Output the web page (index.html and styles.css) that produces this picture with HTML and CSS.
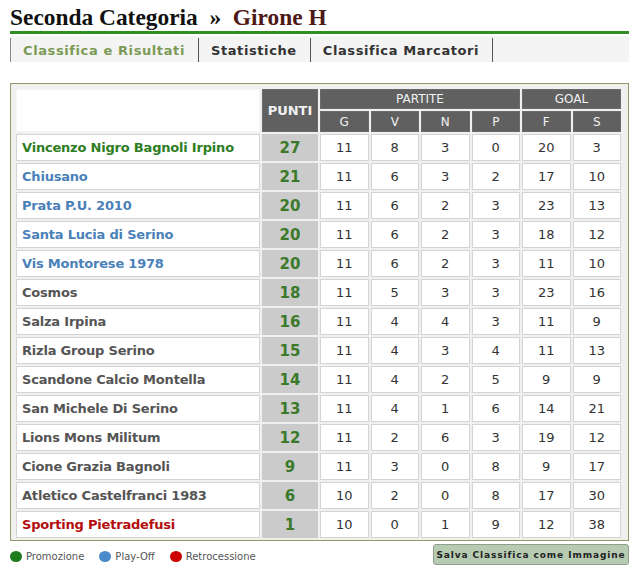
FILE: index.html
```html
<!DOCTYPE html>
<html lang="it">
<head>
<meta charset="utf-8">
<title>Seconda Categoria » Girone H</title>
<link rel="stylesheet" href="styles.css">
</head>
<body>
<div class="page">
  <h1 class="title">Seconda Categoria &nbsp;»&nbsp; <span class="girone">Girone H</span></h1>
  <nav class="tabs">
    <a class="tab active">Classifica e Risultati</a>
    <a class="tab">Statistiche</a>
    <a class="tab">Classifica Marcatori</a>
  </nav>
  <div class="box">
    <table class="standings">
      <thead>
        <tr class="head-top">
          <th class="blank" rowspan="2"></th>
          <th class="punti-h" rowspan="2">PUNTI</th>
          <th class="grp" colspan="4">PARTITE</th>
          <th class="grp" colspan="2">GOAL</th>
        </tr>
        <tr class="head-sub">
          <th class="sub c-g">G</th>
          <th class="sub c-v">V</th>
          <th class="sub c-n">N</th>
          <th class="sub c-p">P</th>
          <th class="sub c-f">F</th>
          <th class="sub c-s">S</th>
        </tr>
      </thead>
      <tbody>
        <tr><td class="team promo">Vincenzo Nigro Bagnoli Irpino</td><td class="pts">27</td><td>11</td><td>8</td><td>3</td><td>0</td><td>20</td><td>3</td></tr>
        <tr><td class="team play">Chiusano</td><td class="pts">21</td><td>11</td><td>6</td><td>3</td><td>2</td><td>17</td><td>10</td></tr>
        <tr><td class="team play">Prata P.U. 2010</td><td class="pts">20</td><td>11</td><td>6</td><td>2</td><td>3</td><td>23</td><td>13</td></tr>
        <tr><td class="team play">Santa Lucia di Serino</td><td class="pts">20</td><td>11</td><td>6</td><td>2</td><td>3</td><td>18</td><td>12</td></tr>
        <tr><td class="team play">Vis Montorese 1978</td><td class="pts">20</td><td>11</td><td>6</td><td>2</td><td>3</td><td>11</td><td>10</td></tr>
        <tr><td class="team">Cosmos</td><td class="pts">18</td><td>11</td><td>5</td><td>3</td><td>3</td><td>23</td><td>16</td></tr>
        <tr><td class="team">Salza Irpina</td><td class="pts">16</td><td>11</td><td>4</td><td>4</td><td>3</td><td>11</td><td>9</td></tr>
        <tr><td class="team">Rizla Group Serino</td><td class="pts">15</td><td>11</td><td>4</td><td>3</td><td>4</td><td>11</td><td>13</td></tr>
        <tr><td class="team">Scandone Calcio Montella</td><td class="pts">14</td><td>11</td><td>4</td><td>2</td><td>5</td><td>9</td><td>9</td></tr>
        <tr><td class="team">San Michele Di Serino</td><td class="pts">13</td><td>11</td><td>4</td><td>1</td><td>6</td><td>14</td><td>21</td></tr>
        <tr><td class="team">Lions Mons Militum</td><td class="pts">12</td><td>11</td><td>2</td><td>6</td><td>3</td><td>19</td><td>12</td></tr>
        <tr><td class="team">Cione Grazia Bagnoli</td><td class="pts">9</td><td>11</td><td>3</td><td>0</td><td>8</td><td>9</td><td>17</td></tr>
        <tr><td class="team">Atletico Castelfranci 1983</td><td class="pts">6</td><td>10</td><td>2</td><td>0</td><td>8</td><td>17</td><td>30</td></tr>
        <tr><td class="team rel">Sporting Pietradefusi</td><td class="pts">1</td><td>10</td><td>0</td><td>1</td><td>9</td><td>12</td><td>38</td></tr>
      </tbody>
    </table>
  </div>
  <div class="footer">
    <ul class="legend">
      <li><span class="dot dot-green"></span>Promozione</li>
      <li><span class="dot dot-blue"></span>Play-Off</li>
      <li><span class="dot dot-red"></span>Retrocessione</li>
    </ul>
    <button class="save">Salva Classifica come Immagine</button>
  </div>
</div>
</body>
</html>
```

FILE: styles.css
```css
* { box-sizing: border-box; }
html, body { margin: 0; padding: 0; background: #fff; }
body { font-family: "DejaVu Sans", Verdana, sans-serif; color: #333; }

.page { width: 619px; margin-left: 10px; }

.title {
  margin: 0;
  padding-top: 5px;
  height: 34px;
  font-family: "Liberation Serif", Georgia, serif;
  font-weight: bold;
  font-size: 23.4px;
  line-height: 25px;
  color: #111;
  border-bottom: 3px solid #2f8f21;
  white-space: nowrap;
}
.girone { color: #4d1a17; }

.tabs {
  display: flex;
  margin-top: 2px;
  height: 26px;
  background: #f4f4f4;
  padding-top: 2px;
}
.tab {
  display: block;
  height: 24px;
  padding: 0 13px 0 12px;
  border-right: 1px solid #555;
  font-size: 13px;
  font-weight: bold;
  letter-spacing: 0.6px;
  line-height: 25px;
  color: #333;
  white-space: nowrap;
}
.tab:first-child { border-left: 1px solid #888; }
.tab.active { color: #7b9a55; }

.box {
  margin-top: 21px;
  border: 1px solid #8d9c68;
  background: #f0f0f0;
  padding: 3px 3px 0 3px;
}
.standings {
  border-collapse: separate;
  border-spacing: 2px;
  table-layout: fixed;
  width: 609px;
}
.standings th {
  background: #606060;
  color: #f2f2f2;
  font-weight: normal;
  font-size: 12px;
  padding: 0;
  border: 1px solid #6a6a6a;
}
.head-top th { height: 20px; }
.head-sub th { height: 21px; }
.standings th.blank { background: #fff; border: 1px solid #f6f6f6; width: 244px; }
.standings th.punti-h { font-weight: bold; font-size: 13px; width: 56px; }
.c-g { width: 53px; }
.c-v, .c-n, .c-p { width: 52px; }
.c-f, .c-s { width: 41px; }

.standings td {
  background: #fff;
  border: 1px solid #d4d4d4;
  height: 27px;
  padding: 0;
  text-align: center;
  font-size: 13px;
  color: #333;
}
.standings td.team {
  text-align: left;
  padding-left: 5px;
  font-weight: bold;
  font-size: 13px;
  letter-spacing: -0.2px;
  color: #555;
}
.standings td.team.promo { color: #2e7d1f; }
.standings td.team.play { color: #4a81b8; }
.standings td.team.rel { color: #b30d0d; }
.standings td.pts {
  background: #cbcbcb;
  border-color: #cbcbcb;
  font-weight: bold;
  font-size: 15px;
  color: #3b7a2a;
}

.footer {
  display: flex;
  justify-content: space-between;
  align-items: flex-start;
  margin-top: 3px;
}
.legend {
  display: flex;
  list-style: none;
  margin: 7px 0 0 0;
  padding: 0;
  gap: 15px;
  font-size: 10px;
  color: #555;
}
.legend li { display: flex; align-items: center; }
.dot {
  display: inline-block;
  width: 12px;
  height: 11px;
  border-radius: 50%;
  margin-right: 4px;
}
.dot-green { background: #1d7d1d; }
.dot-blue { background: #4a8acb; }
.dot-red { background: #cc0000; }

.save {
  height: 21px;
  width: 196px;
  padding: 0;
  border: 1px solid #8f9f8c;
  border-radius: 3px;
  background: #b7cbb3;
  font-family: "DejaVu Sans", Verdana, sans-serif;
  font-weight: bold;
  font-size: 9px;
  letter-spacing: 0.9px;
  white-space: nowrap;
  color: #222;
}
```
